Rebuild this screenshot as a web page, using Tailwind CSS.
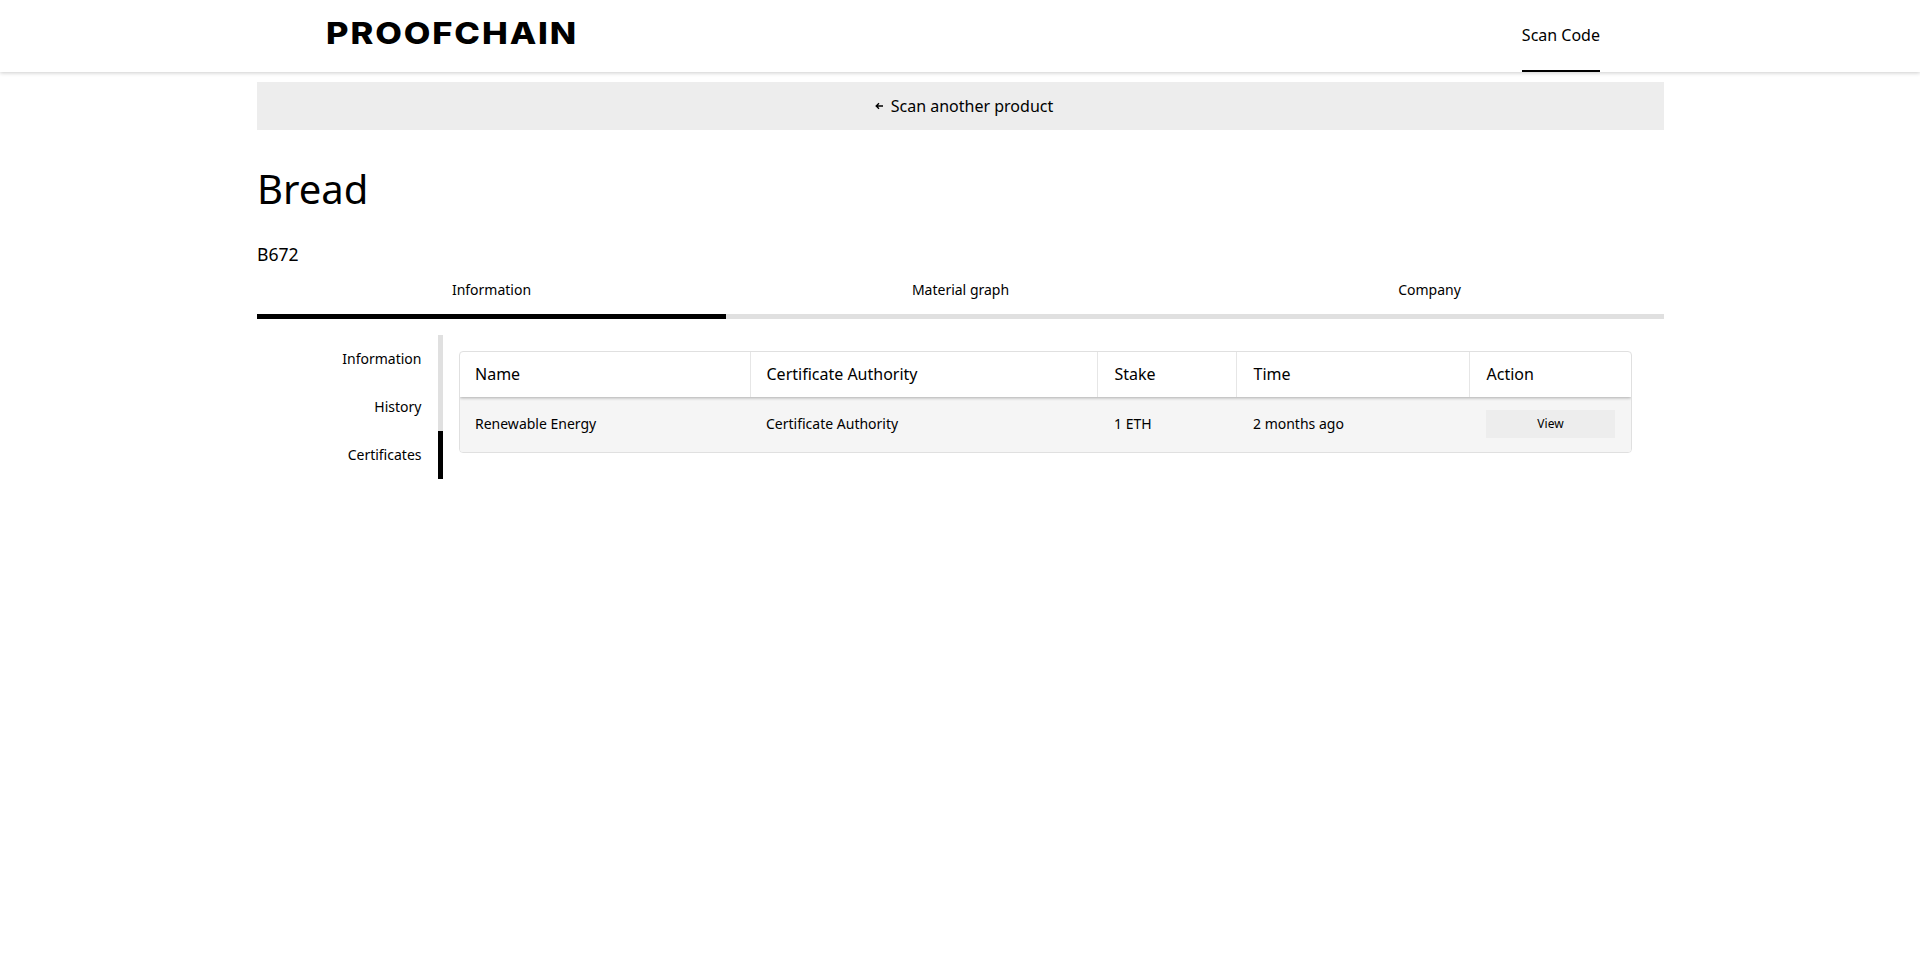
<!DOCTYPE html>
<html lang="en">
<head>
    <meta charset="UTF-8">
    <meta name="viewport" content="width=device-width, initial-scale=1.0">
    <title>Proofchain</title>
    <script src="https://cdn.jsdelivr.net/npm/@tailwindcss/browser@4"></script>
</head>
<body class="bg-white text-black font-['Noto_Sans',sans-serif] h-[975px] overflow-hidden">
    <!-- Header -->
    <header class="h-[72px] flex items-stretch justify-between pl-[326px] pr-[320px] shadow-[0_1px_4px_rgba(0,0,0,0.2)] bg-white">
        <div class="h-[66px] flex items-center origin-left scale-x-[1.15] font-['Inter',sans-serif] font-extrabold text-[30px] leading-none tracking-[1.65px]">PROOFCHAIN</div>
        <a class="flex items-center text-base border-b-[2px] border-black">Scan Code</a>
    </header>

    <main class="w-[1407px] ml-[257px]">
        <!-- Back link -->
        <div class="mt-[10px] h-[48px] pl-[7px] bg-[#ededed] flex items-center justify-center gap-2 text-base">
            <svg width="8" height="8" viewBox="0 0 8 8" fill="none" stroke="currentColor" stroke-width="1.4"><path d="M8 4H1.5M4 1.2 1.2 4 4 6.8"/></svg>
            <span>Scan another product</span>
        </div>

        <h1 class="mt-[29px] text-[40px] leading-[60px] font-normal">Bread</h1>
        <p class="mt-[24px] text-[17.6px] leading-[22px]">B672</p>

        <!-- Main tabs -->
        <div class="mt-[6px] grid grid-cols-3 text-sm text-center">
            <div class="h-[48px] pt-[9px] border-b-[5px] border-black">Information</div>
            <div class="h-[48px] pt-[9px] border-b-[5px] border-[#e0e0e0]">Material graph</div>
            <div class="h-[48px] pt-[9px] border-b-[5px] border-[#e0e0e0]">Company</div>
        </div>

        <div class="mt-[16px] flex items-start">
            <!-- Side tabs -->
            <nav class="w-[186px] text-sm text-right">
                <div class="h-[48px] pr-[16.5px] flex items-center justify-end border-r-[5px] border-[#e0e0e0]">Information</div>
                <div class="h-[48px] pr-[16.5px] flex items-center justify-end border-r-[5px] border-[#e0e0e0]">History</div>
                <div class="h-[48px] pr-[16.5px] flex items-center justify-end border-r-[5px] border-black">Certificates</div>
            </nav>

            <!-- Certificates table -->
            <div class="ml-[16px] mt-[16px] w-[1173px] border border-[#e0e0e0] rounded-[4px] overflow-hidden">
                <table class="w-full table-fixed border-collapse text-left">
                    <colgroup>
                        <col class="w-[290px]">
                        <col class="w-[347px]">
                        <col class="w-[139px]">
                        <col class="w-[233px]">
                        <col>
                    </colgroup>
                    <thead class="text-base">
                        <tr class="h-[45px] shadow-[0_1px_3px_rgba(0,0,0,0.3)] relative">
                            <th class="pl-[15px] pr-4 pb-[2px] font-normal">Name</th>
                            <th class="px-4 pb-[2px] font-normal border-l border-[#e6e6e6]">Certificate Authority</th>
                            <th class="pl-[17px] pr-4 pb-[2px] font-normal border-l border-[#e6e6e6]">Stake</th>
                            <th class="pl-[17px] pr-4 pb-[2px] font-normal border-l border-[#e6e6e6]">Time</th>
                            <th class="pl-[17px] pr-4 pb-[2px] font-normal border-l border-[#e6e6e6]">Action</th>
                        </tr>
                    </thead>
                    <tbody class="text-sm bg-[#f5f5f5]">
                        <tr class="h-[55px]">
                            <td class="pl-[15px] pr-4 pb-[1px]">Renewable Energy</td>
                            <td class="px-4 pb-[1px]">Certificate Authority</td>
                            <td class="pl-[17px] pr-4 pb-[1px]">1 ETH</td>
                            <td class="pl-[17px] pr-4 pb-[1px]">2 months ago</td>
                            <td class="pl-[17px] pr-4 pb-[1px]">
                                <button class="w-[129px] h-[28px] bg-[#ededed] text-xs">View</button>
                            </td>
                        </tr>
                    </tbody>
                </table>
            </div>
        </div>
    </main>
</body>
</html>
